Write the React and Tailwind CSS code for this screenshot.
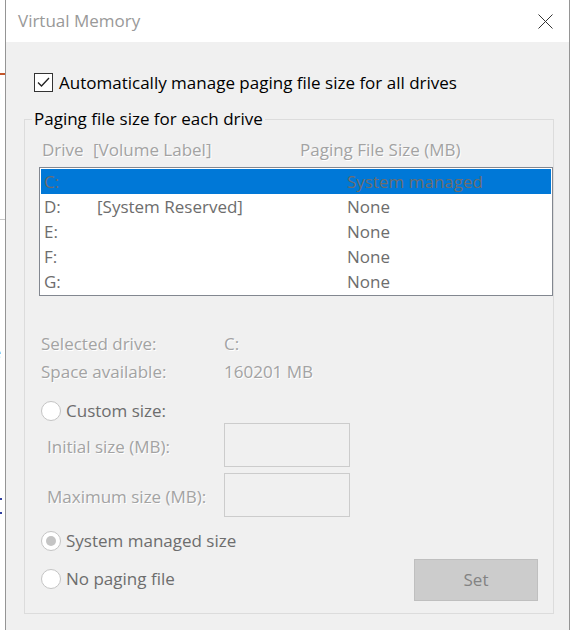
import React from 'react';

const DRIVES = [
  { drive: 'C:', label: '', size: 'System managed', selected: true },
  { drive: 'D:', label: '[System Reserved]', size: 'None' },
  { drive: 'E:', label: '', size: 'None' },
  { drive: 'F:', label: '', size: 'None' },
  { drive: 'G:', label: '', size: 'None' },
];

const dim = 'text-[#a3a3a3] [text-shadow:1px_1px_0_#ffffff]';

function Radio({ checked }) {
  return (
    <span className="flex h-[20px] w-[20px] shrink-0 items-center justify-center rounded-full border border-[#c4c4c4] bg-white">
      {checked && <span className="h-[10px] w-[10px] rounded-full bg-[#c4c4c4]" />}
    </span>
  );
}

function SizeInput() {
  return <div className="h-[44px] w-[126px] border border-[#cccccc] bg-[#f0f0f0]" />;
}

export default function App() {
  return (
    <div className="flex h-[630px] w-[570px] overflow-hidden bg-white font-['Open_Sans',sans-serif] text-[17px] leading-[20px]">
      {/* window behind */}
      <div className="flex w-[5px] shrink-0 flex-col overflow-hidden bg-white text-[14px] text-black">
        <div className="mt-[73px] h-[2px] w-full bg-[#c4562a]" />
        <div className="-ml-[8px] mt-[11px] h-[17px] leading-[17px]">n</div>
        <div className="-ml-[7px] h-[17px] leading-[17px]">c</div>
        <div className="-ml-[7px] h-[17px] leading-[17px]">c</div>
        <div className="mt-[82px] h-[1px] w-full bg-[#c8c8c8]" />
        <div className="-ml-[7px] mt-[124px] leading-[18px]">e</div>
        <div className="-ml-[7px] mt-[14px] leading-[18px]">v</div>
        <div className="-ml-[9px] mt-[22px] leading-[18px]">n</div>
        <div className="-ml-[7px] mt-[4px] leading-[18px]">r</div>
        <div className="mt-[42px] h-[2px] w-[2px] bg-[#3040a0]" />
        <div className="mt-[12px] h-[2px] w-[2px] bg-[#3040a0]" />
      </div>

      {/* dialog */}
      <div className="flex w-[565px] shrink-0 flex-col border-x border-[#959595]">
        <div className="flex h-[42px] shrink-0 items-center justify-between bg-white pl-[12px] pr-[16px]">
          <span className="text-[17px] text-[#999999]">Virtual Memory</span>
          <svg width="15" height="15" viewBox="0 0 15 15">
            <path d="M0.5 0.5 L14.5 14.5 M14.5 0.5 L0.5 14.5" stroke="#333" strokeWidth="1" fill="none" />
          </svg>
        </div>

        <div className="flex-1 overflow-hidden bg-[#f0f0f0] pl-[18px]">
          <div className="ml-[10px] mt-[31px] flex h-[19px] items-center gap-[6px]">
            <span className="flex h-[19px] w-[19px] items-center justify-center border border-[#333333] bg-white">
              <svg width="17" height="17" viewBox="0 0 17 17">
                <polyline points="3,8.5 6.5,12 14,4" stroke="#222" strokeWidth="1.3" fill="none" />
              </svg>
            </span>
            <span className="text-black">Automatically manage paging file size for all drives</span>
          </div>

          <fieldset className="mt-[17px] w-[528px] border border-[#dcdcdc] px-0 pb-[12px]">
            <legend className="ml-[7px] px-[2px] leading-[20px] text-black">Paging file size for each drive</legend>

            <div className={`ml-[17px] mt-[11px] grid h-[20px] grid-cols-[51px_207px_1fr] items-center ${dim}`}>
              <span>Drive</span>
              <span>[Volume Label]</span>
              <span>Paging File Size (MB)</span>
            </div>

            <div className="ml-[14px] mt-[7px] h-[129px] w-[514px] border border-[#828790] bg-white p-[1px]">
              {DRIVES.map((d) => (
                <div
                  key={d.drive}
                  className={`grid h-[25px] grid-cols-[53px_250px_1fr] items-center pl-[3px] text-[#6d6d6d] ${d.selected ? 'bg-[#0078d7]' : ''}`}
                >
                  <span>{d.drive}</span>
                  <span>{d.label}</span>
                  <span>{d.size}</span>
                </div>
              ))}
            </div>

            <div className={`ml-[16px] mt-[38px] grid grid-cols-[183px_1fr] gap-y-[8px] ${dim}`}>
              <span>Selected drive:</span>
              <span>C:</span>
              <span>Space available:</span>
              <span>160201 MB</span>
            </div>

            <div className="ml-[16px] mt-[19px] flex h-[20px] items-center gap-[5px] text-[#6d6d6d]">
              <Radio />
              <span>Custom size:</span>
            </div>

            <div className="mt-[2px] grid grid-cols-[177px_1fr] items-center pl-[22px]">
              <span className={`pt-[3px] ${dim}`}>Initial size (MB):</span>
              <SizeInput />
            </div>
            <div className="mt-[6px] grid grid-cols-[177px_1fr] items-center pl-[22px]">
              <span className={`pt-[3px] ${dim}`}>Maximum size (MB):</span>
              <SizeInput />
            </div>

            <div className="mt-[14px] flex items-start pl-[16px] pr-[15px]">
              <div className="flex flex-col gap-[18px] text-[#6d6d6d]">
                <div className="flex h-[20px] items-center gap-[5px]">
                  <Radio checked />
                  <span>System managed size</span>
                </div>
                <div className="flex h-[20px] items-center gap-[5px]">
                  <Radio />
                  <span>No paging file</span>
                </div>
              </div>
              <button className="ml-auto mt-[28px] flex h-[42px] w-[124px] items-center justify-center border border-[#bfbfbf] bg-[#cccccc] text-[#838383]">
                Set
              </button>
            </div>
          </fieldset>

          <div className="ml-[16px] mt-[14px] text-black">Total paging file size for all drives</div>
        </div>
      </div>
    </div>
  );
}
